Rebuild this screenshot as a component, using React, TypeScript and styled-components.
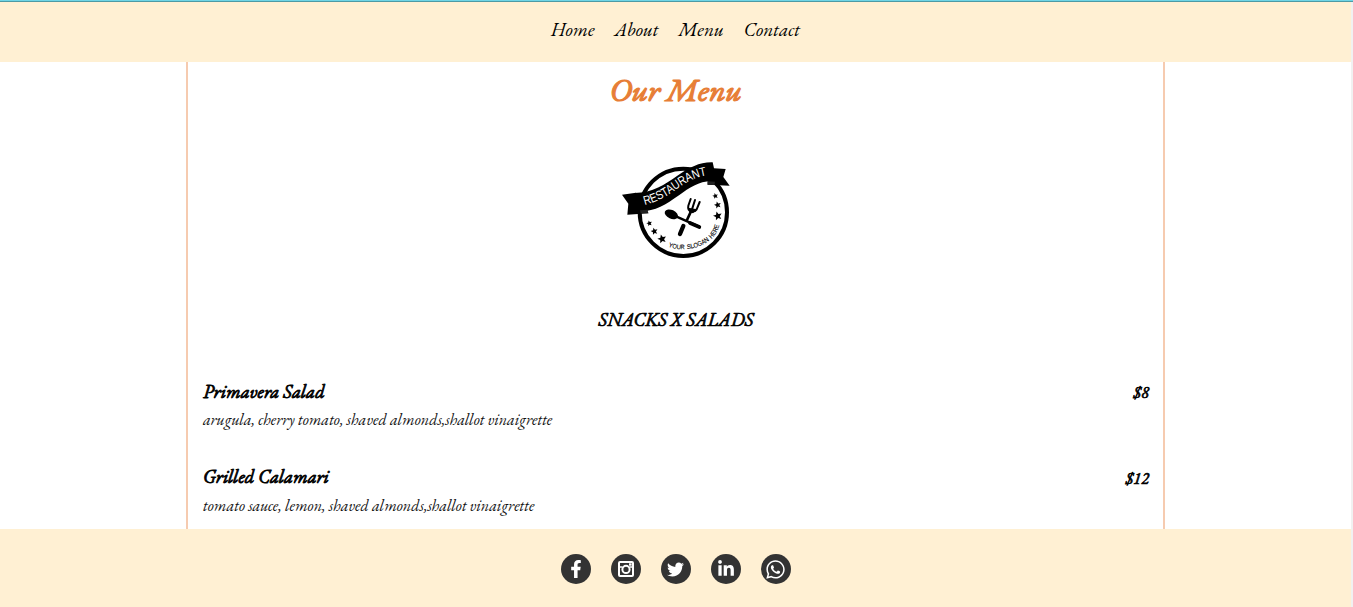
import React from "react";
import styled, { createGlobalStyle } from "styled-components";
import { FaFacebookF, FaTwitter, FaLinkedinIn, FaWhatsapp } from "react-icons/fa";

const GlobalStyle = createGlobalStyle`
  * { box-sizing: border-box; }
  body {
    margin: 0;
    background: #fff;
    color: #000;
    font-family: "EB Garamond", "Liberation Serif", serif;
    font-style: italic;
    overflow: hidden;
  }
  h1, h2, h3, p { margin: 0; font-weight: 400; }
`;

const TopStrip = styled.div`
  height: 2px;
  background: #4d9aa5;
  border-top: 1px solid #6fd5e6;
`;

const Page = styled.div`
  display: flex;
  flex-direction: column;
  height: 605px;
  border-right: 2px solid #f1f1f1;
`;

const Nav = styled.nav`
  flex: none;
  display: flex;
  justify-content: center;
  gap: 20px;
  height: 60px;
  padding-top: 16px;
  background: #fff0d3;
`;

const NavLink = styled.a`
  font-size: 19.2px;
  line-height: 24px;
  color: #000;
  text-decoration: none;
`;

const Column = styled.main`
  flex: 1;
  display: flex;
  flex-direction: column;
  align-items: center;
  width: 979px;
  margin: 0 auto;
  padding: 0 14px 0 15px;
  border: solid #f6cbb0;
  border-width: 0 2px;
  overflow: hidden;
`;

const Title = styled.h1`
  margin-top: 8px;
  font-size: 32px;
  line-height: 40px;
  color: #e77e36;
  -webkit-text-stroke: 1.2px #e77e36;
`;

const Logo = styled.svg`
  flex: none;
  width: 130px;
  height: 120px;
  margin: 40px 2px 0 0;
`;

const Section = styled.h2`
  margin-top: 37px;
  font-size: 18.72px;
  line-height: 25px;
  -webkit-text-stroke: 0.7px #000;
`;

const Dishes = styled.div`
  display: flex;
  flex-direction: column;
  gap: 35.34px;
  width: 100%;
  margin-top: 47px;
`;

const Row = styled.div`
  display: flex;
  justify-content: space-between;
  align-items: flex-start;
  height: 30.1px;
`;

const DishName = styled.h3`
  font-size: 18.72px;
  line-height: 25px;
  -webkit-text-stroke: 0.8px #000;
`;

const Price = styled.span`
  margin-top: 3.2px;
  font-size: 16px;
  line-height: 21px;
  letter-spacing: 0.15px;
  -webkit-text-stroke: 0.7px #000;
`;

const Description = styled.p`
  font-size: 16px;
  line-height: 21px;
  color: #111;
`;

const Dish = styled.article`
  height: 50.1px;
`;

const Footer = styled.footer`
  flex: none;
  display: flex;
  justify-content: center;
  gap: 20px;
  height: 78px;
  padding-top: 25px;
  background: #fff0d3;
`;

const Social = styled.a<{ $size: number }>`
  display: flex;
  align-items: center;
  justify-content: center;
  width: 30px;
  height: 30px;
  border-radius: 50%;
  background: #333;
  color: #fff;
  svg { width: ${(p) => p.$size}px; height: ${(p) => p.$size}px; }
`;

const links = ["Home", "About", "Menu", "Contact"];

const dishes = [
  {
    name: "Primavera Salad",
    price: "$8",
    text: "arugula, cherry tomato, shaved almonds,shallot vinaigrette",
  },
  {
    name: "Grilled Calamari",
    price: "$12",
    text: "tomato sauce, lemon, shaved almonds,shallot vinaigrette",
  },
];

const stars = [
  [118, 220, 9], [133, 244, 11], [156, 267, 14],
  [316, 138, 9], [323, 165, 11], [323, 198, 14],
];

const starPoints = (cx: number, cy: number, r: number) =>
  Array.from({ length: 10 }, (_, i) => {
    const a = (i * Math.PI) / 5 - Math.PI / 2 - 0.25;
    const d = i % 2 ? r * 0.45 : r;
    return `${cx + d * Math.cos(a)},${cy + d * Math.sin(a)}`;
  }).join(" ");

const RestaurantLogo = () => (
  <Logo viewBox="0 0 390 360" aria-label="Restaurant">
    <circle cx="220" cy="187" r="131" fill="#fff" stroke="#000" strokeWidth="12" />
    <path d="M36 134 L78 128 L116 190 L52 194 L55 161Z" />
    <path d="M300 54 L347 57 L340 81 L359 107 L292 104Z" />
    <path d="M74 129 C128 128 165 103 202 77 C240 52 268 36 308 37 L321 95 C272 89 243 110 207 136 C167 164 137 184 91 184Z" />
    <path d="M90 181 L114 179 L113 190 L92 190Z M292 94 L315 95 L313 105 L294 104Z" fill="#222" />
    <path id="ribbon-line" d="M104 165 C138 157 170 140 203 115 C237 92 262 79 297 75" fill="none" />
    <text fill="#fff" fontFamily="Liberation Sans, sans-serif" fontStyle="normal" fontSize="37">
      <textPath href="#ribbon-line" textLength="208" lengthAdjust="spacingAndGlyphs">RESTAURANT</textPath>
    </text>
    <path id="slogan-line" d="M175 290 C227 312 315 288 328 225" fill="none" />
    <text fill="#000" stroke="#000" strokeWidth="0.3" fontFamily="Liberation Sans, sans-serif" fontStyle="normal" fontSize="20" wordSpacing="3">
      <textPath href="#slogan-line" textLength="186" lengthAdjust="spacingAndGlyphs">YOUR SLOGAN HERE</textPath>
    </text>
    {stars.map(([x, y, r]) => (
      <polygon key={`${x}-${y}`} points={starPoints(x, y, r)} />
    ))}
    <ellipse cx="184" cy="193" rx="21" ry="13" transform="rotate(24 184 193)" />
    <path d="M198 199 L267 230" stroke="#000" strokeWidth="7" strokeLinecap="round" />
    <path d="M240 219 L268 231" stroke="#000" strokeWidth="11" strokeLinecap="round" />
    <path d="M220 228 L210 252" stroke="#000" strokeWidth="13" strokeLinecap="round" />
    <path d="M231 210 L244 182" stroke="#000" strokeWidth="8" strokeLinecap="round" />
    <path
      d="M242 147 L235 167 Q232 181 244 184 Q254 187 260 178 L269 156 M255 150 L246 178"
      fill="none"
      stroke="#000"
      strokeWidth="6"
      strokeLinecap="round"
    />
    <path d="M235 173 L261 178 L249 190 L238 186Z" />
  </Logo>
);

const Camera = () => (
  <svg viewBox="0 0 16 16">
    <rect x="1" y="1" width="14" height="14" rx="1" fill="none" stroke="#fff" strokeWidth="2" />
    <path d="M1 6h3.6M11.4 6H15" stroke="#fff" strokeWidth="1.3" />
    <circle cx="8" cy="8.4" r="3.6" fill="none" stroke="#fff" strokeWidth="2" />
    <rect x="11" y="2.3" width="2.6" height="2.4" fill="#fff" />
  </svg>
);

export default function App() {
  return (
    <>
      <GlobalStyle />
      <TopStrip />
      <Page>
        <Nav>
          {links.map((label) => (
            <NavLink key={label}>{label}</NavLink>
          ))}
        </Nav>
        <Column>
          <Title>Our Menu</Title>
          <RestaurantLogo />
          <Section>SNACKS X SALADS</Section>
          <Dishes>
            {dishes.map((d) => (
              <Dish key={d.name}>
                <Row>
                  <DishName>{d.name}</DishName>
                  <Price>{d.price}</Price>
                </Row>
                <Description>{d.text}</Description>
              </Dish>
            ))}
          </Dishes>
        </Column>
        <Footer>
          <Social $size={18} aria-label="Facebook"><FaFacebookF /></Social>
          <Social $size={16} aria-label="Instagram"><Camera /></Social>
          <Social $size={17} aria-label="Twitter"><FaTwitter /></Social>
          <Social $size={18} aria-label="LinkedIn"><FaLinkedinIn /></Social>
          <Social $size={21} aria-label="WhatsApp"><FaWhatsapp /></Social>
        </Footer>
      </Page>
    </>
  );
}
